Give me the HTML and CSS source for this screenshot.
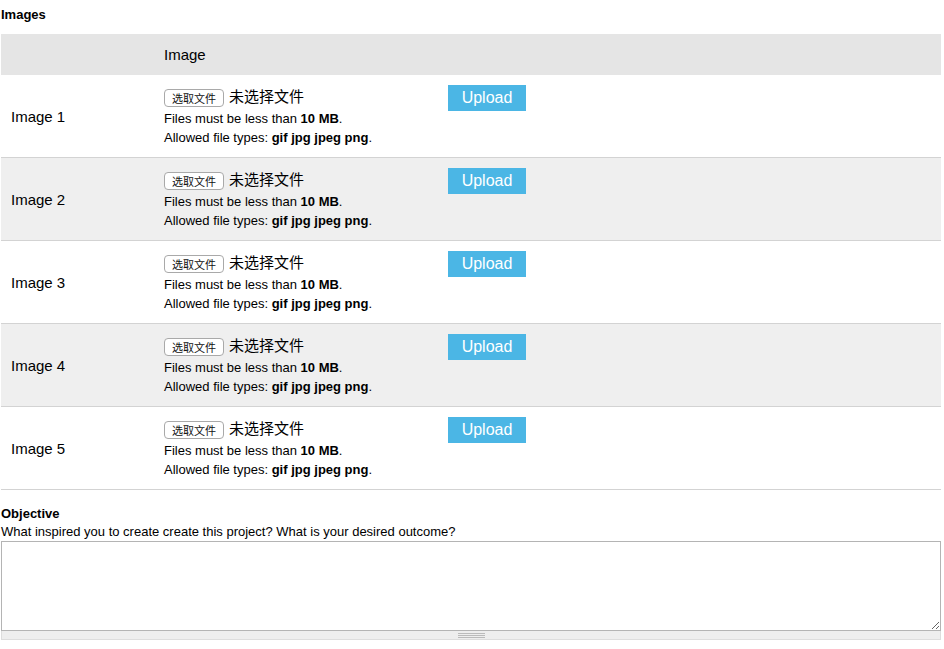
FILE: index.html
```html
<!DOCTYPE html>
<html>
<head>
<meta charset="utf-8">
<link rel="stylesheet" href="styles.css">
</head>
<body>
<div class="page">
  <div class="label">Images</div>
  <div class="table">
    <div class="row head">
      <div class="c1"></div>
      <div class="c2">Image</div>
    </div>
    <div class="row odd">
      <div class="c1 name">Image 1</div>
      <div class="c2">
        <div class="fileline">
          <div class="filewrap"><span class="fbtn">选取文件</span><span class="fnone">未选择文件</span></div>
          <span class="upload">Upload</span>
        </div>
        <div class="desc">Files must be less than <b>10 MB</b>.</div>
        <div class="desc">Allowed file types: <b>gif jpg jpeg png</b>.</div>
      </div>
    </div>
    <div class="row even">
      <div class="c1 name">Image 2</div>
      <div class="c2">
        <div class="fileline">
          <div class="filewrap"><span class="fbtn">选取文件</span><span class="fnone">未选择文件</span></div>
          <span class="upload">Upload</span>
        </div>
        <div class="desc">Files must be less than <b>10 MB</b>.</div>
        <div class="desc">Allowed file types: <b>gif jpg jpeg png</b>.</div>
      </div>
    </div>
    <div class="row odd">
      <div class="c1 name">Image 3</div>
      <div class="c2">
        <div class="fileline">
          <div class="filewrap"><span class="fbtn">选取文件</span><span class="fnone">未选择文件</span></div>
          <span class="upload">Upload</span>
        </div>
        <div class="desc">Files must be less than <b>10 MB</b>.</div>
        <div class="desc">Allowed file types: <b>gif jpg jpeg png</b>.</div>
      </div>
    </div>
    <div class="row even">
      <div class="c1 name">Image 4</div>
      <div class="c2">
        <div class="fileline">
          <div class="filewrap"><span class="fbtn">选取文件</span><span class="fnone">未选择文件</span></div>
          <span class="upload">Upload</span>
        </div>
        <div class="desc">Files must be less than <b>10 MB</b>.</div>
        <div class="desc">Allowed file types: <b>gif jpg jpeg png</b>.</div>
      </div>
    </div>
    <div class="row odd">
      <div class="c1 name">Image 5</div>
      <div class="c2">
        <div class="fileline">
          <div class="filewrap"><span class="fbtn">选取文件</span><span class="fnone">未选择文件</span></div>
          <span class="upload">Upload</span>
        </div>
        <div class="desc">Files must be less than <b>10 MB</b>.</div>
        <div class="desc">Allowed file types: <b>gif jpg jpeg png</b>.</div>
      </div>
    </div>
  </div>
  <div class="objective">
    <div class="label2">Objective</div>
    <div class="help">What inspired you to create create this project? What is your desired outcome?</div>
    <textarea class="ta"></textarea>
    <div class="grippie"></div>
  </div>
</div>
</body>
</html>
```
FILE: styles.css
```css
html, body {
  margin: 0;
  padding: 0;
  background: #fff;
}
body {
  font-family: "Liberation Sans", Arial, "Noto Sans CJK SC", sans-serif;
  color: #000;
}
.page {
  width: 940px;
  margin-left: 1px;
}
.label {
  font-weight: bold;
  font-size: 13px;
  line-height: 15px;
  padding-top: 7px;
  margin-bottom: 12px;
}
.row {
  display: grid;
  grid-template-columns: 153px 1fr;
  border-bottom: 1px solid #d3d3d3;
}
.row.head {
  background: #e5e5e5;
  border-bottom: 0;
  font-size: 15px;
  line-height: 20px;
}
.row.head .c1, .row.head .c2 {
  padding: 11px 10px 10px;
}
.row.even {
  background: #efefef;
}
.c1, .c2 {
  padding: 10px;
}
.name {
  font-size: 15px;
  display: flex;
  align-items: center;
}
.fileline {
  display: flex;
  height: 24px;
  align-items: flex-start;
}
.filewrap {
  width: 284px;
  display: flex;
  align-items: flex-start;
}
.fbtn {
  box-sizing: border-box;
  margin-top: 4px;
  width: 60px;
  height: 18px;
  border: 1px solid #a9a9a9;
  border-radius: 4px;
  background: #fff;
  font-family: "Noto Sans CJK SC", sans-serif;
  font-size: 11px;
  line-height: 16px;
  text-align: center;
  color: #111;
}
.fnone {
  margin-left: 5px;
  margin-top: 1px;
  font-family: "Noto Sans CJK SC", sans-serif;
  font-size: 15px;
  line-height: 20px;
}
.upload {
  margin-top: 0;
  width: 78px;
  height: 26px;
  background: #4bb6e5;
  color: #fff;
  font-size: 16px;
  line-height: 26px;
  text-align: center;
  flex: none;
}
.desc {
  font-size: 13px;
  line-height: 19px;
}
.objective {
  margin-top: 16px;
}
.label2 {
  font-weight: bold;
  font-size: 13px;
  line-height: 15px;
}
.help {
  font-size: 13px;
  line-height: 15px;
  margin-top: 3px;
  margin-bottom: 2px;
}
.ta {
  display: block;
  box-sizing: border-box;
  width: 940px;
  height: 90px;
  margin: 0;
  border: 1px solid #b4b4b4;
  resize: vertical;
  background: #fff;
}
.grippie {
  box-sizing: border-box;
  height: 9px;
  background: #eee;
  border: 1px solid #ddd;
  border-top: 0;
  padding-top: 2px;
}
.grippie::after {
  content: "";
  display: block;
  width: 27px;
  height: 5px;
  margin: 0 auto;
  background: repeating-linear-gradient(#bbb 0 1px, transparent 1px 2px);
}
```
